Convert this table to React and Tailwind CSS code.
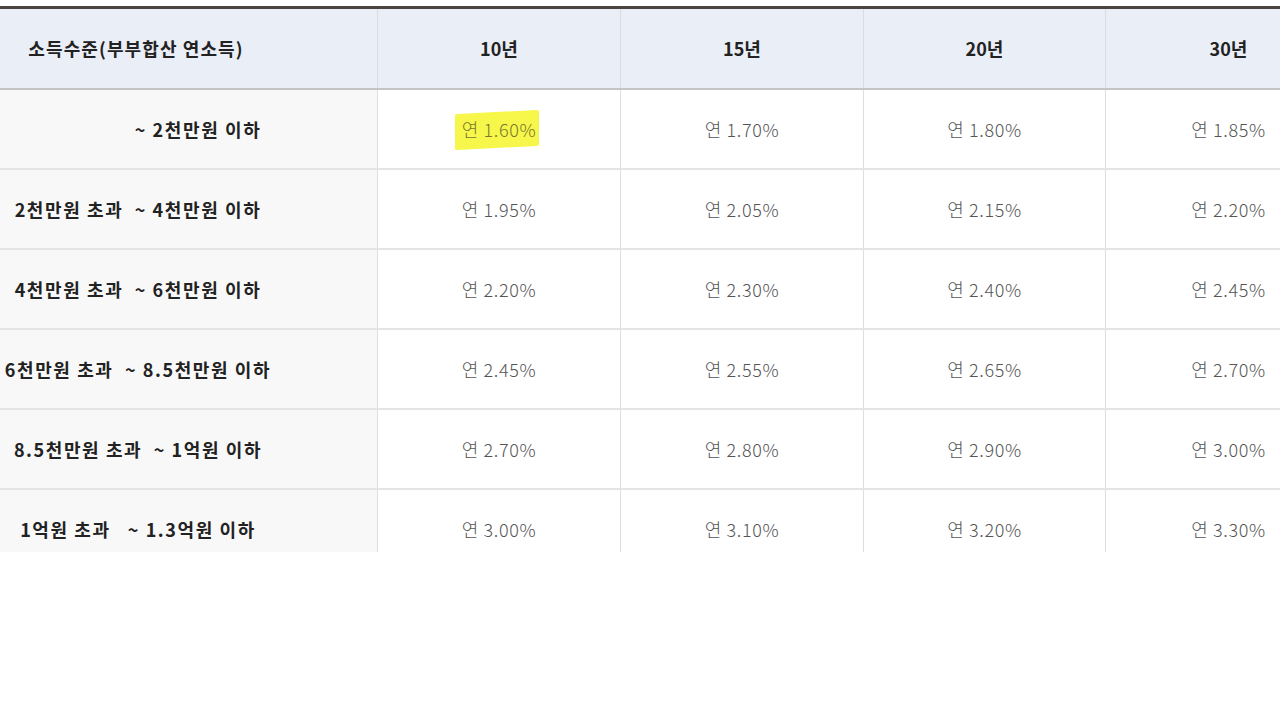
import React from "react";

const rows = [
  { label: "~ 2천만원 이하", shift: "pl-[120px]", v: ["1.60%", "1.70%", "1.80%", "1.85%"] },
  { label: "2천만원 초과  ~ 4천만원 이하", shift: "", v: ["1.95%", "2.05%", "2.15%", "2.20%"] },
  { label: "4천만원 초과  ~ 6천만원 이하", shift: "", v: ["2.20%", "2.30%", "2.40%", "2.45%"] },
  { label: "6천만원 초과  ~ 8.5천만원 이하", shift: "", v: ["2.45%", "2.55%", "2.65%", "2.70%"] },
  { label: "8.5천만원 초과  ~ 1억원 이하", shift: "", v: ["2.70%", "2.80%", "2.90%", "3.00%"] },
  { label: "1억원 초과   ~ 1.3억원 이하", shift: "", v: ["3.00%", "3.10%", "3.20%", "3.30%"] },
];

const font = { fontFamily: '"Noto Sans CJK KR", "Noto Sans", sans-serif' };

export default function App() {
  return (
    <div className="w-[1280px] h-[720px] bg-white overflow-hidden" style={font}>
      <div className="pt-[6px] h-[552px] overflow-hidden">
        <div className="w-[1351px] border-t-[3px] border-[#4b4440]">
          <div className="grid grid-cols-[377px_243px_243px_242px_246px] bg-[#eaeef6] h-[81px] border-b-2 border-[#c4c4c4] text-[18px] font-bold text-[#222]">
            <div className="flex items-center">
              <div className="w-[272px] text-center tracking-[1.1px]">소득수준(부부합산 연소득)</div>
            </div>
            {["10년", "15년", "20년", "30년"].map((h) => (
              <div key={h} className="flex items-center justify-center border-l border-[#d9dce2]">
                {h}
              </div>
            ))}
          </div>
          {rows.map((r, i) => (
            <div
              key={i}
              className="grid grid-cols-[377px_243px_243px_242px_246px] h-[80px] border-b-2 border-[#e4e4e4]"
            >
              <div className="flex items-center bg-[#f8f8f8] text-[18px] font-bold text-[#222]">
                <div className={`w-[276px] text-center whitespace-pre tracking-[1.6px] ${r.shift}`}>{r.label}</div>
              </div>
              {r.v.map((v, j) => (
                <div
                  key={j}
                  className="flex items-center justify-center border-l border-[#dedede] text-[18px] font-light text-[#555] tracking-[0.6px]"
                >
                  {i === 0 && j === 0 ? (
                    <span className="relative inline-block">
                      <span className="absolute left-[-7px] right-[-3px] top-[-4px] bottom-[-5px] bg-[#f7f64a] -skew-y-3 rounded-[2px]"></span>
                      <span className="relative text-[#77772e]">연 {v}</span>
                    </span>
                  ) : (
                    <span>연 {v}</span>
                  )}
                </div>
              ))}
            </div>
          ))}
        </div>
      </div>
    </div>
  );
}
